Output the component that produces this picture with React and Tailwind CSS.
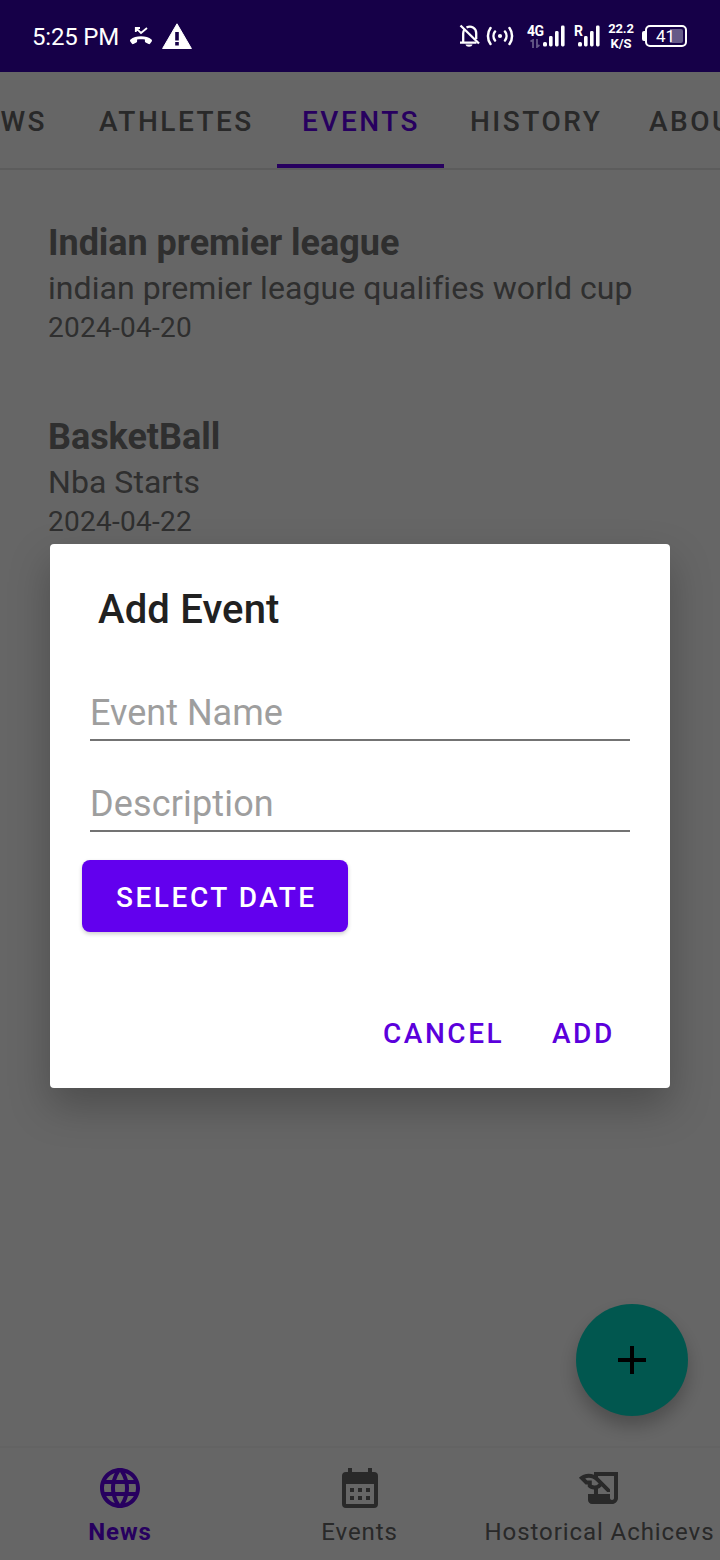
import React from "react";
import { MdLanguage, MdHistoryEdu } from "react-icons/md";

const TABS = [
  { label: "NEWS", box: "w-[75px] justify-end pr-[28px]" },
  { label: "ATHLETES", box: "w-[202px] pl-6" },
  { label: "EVENTS", box: "w-[167px] pl-[25px]", active: true },
  { label: "HISTORY", box: "w-[180px] pl-[26px]" },
  { label: "ABOUT", box: "w-[150px] pl-[25px]" },
];

const EVENTS = [
  { name: "Indian premier league", text: "indian premier league qualifies world cup", date: "2024-04-20" },
  { name: "BasketBall", text: "Nba Starts", date: "2024-04-22" },
];

function SignalBars({ className }) {
  return (
    <svg className={className} viewBox="0 0 22 22" fill="#fff">
      <rect x="0" y="17" width="4" height="4.5" rx="1.6" />
      <rect x="6" y="11" width="3.6" height="10.5" rx="1.4" />
      <rect x="12" y="6" width="3.6" height="15.5" rx="1.4" />
      <rect x="18" y="0.5" width="3.6" height="21" rx="1.4" />
    </svg>
  );
}

function StatusBar() {
  return (
    <header className="flex h-[72px] shrink-0 items-center bg-[#160048] pl-8 pr-[33px] text-white">
      <span className="mt-[1px] w-[97px] whitespace-nowrap text-[24px] leading-7 tracking-[-0.2px]">5:25 PM</span>
      <svg className="h-[20px] w-[24px]" viewBox="0 0 24 20">
        <path d="M6.8 6V2H11M7 2.200l5 4.800 6-5" fill="none" stroke="#fff" strokeWidth="1.8" />
        <path
          d="M12 10.200C7.800 10.200 4 11.300 1.500 13.400c-.6.5-.6 1.300-.2 2l1.500 2.200c.4.500 1 .7 1.600.4l3-1.400c.4-.2.7-.6.7-1v-2c2.500-.6 5.300-.6 7.800 0v2c0 .4.300.8.7 1l3 1.400c.6.3 1.200.1 1.600-.4l1.500-2.200c.4-.7.4-1.500-.2-2C20 11.300 16.200 10.200 12 10.200z"
          fill="#fff"
        />
      </svg>
      <svg className="ml-[9px] h-[26px] w-[30px]" viewBox="0 0 30 26">
        <path d="M15 .8 29.400 25.500H.6z" fill="#fff" stroke="#fff" strokeLinejoin="round" />
        <path d="M13.200 9h3.600v8.500h-3.600zM13.200 19h3.600v3.500h-3.600z" fill="#160048" />
      </svg>
      <div className="ml-auto flex items-center">
        <svg className="h-[24px] w-[22px]" viewBox="0 0 22 24" fill="none" stroke="#fff" strokeWidth="2.300">
          <path d="M4.200 18.500V9.500c0-1.800.5-3 1.300-4.100M7.500 3.600c4.500-2.600 9.700.5 9.700 5.400v6M1 18.600h16.500" />
          <path d="M1.500 1.500 20 19.500" strokeWidth="2.300" />
          <path d="M6.500 20.500h7c-.5 1.500-1.600 2.200-3.500 2.200s-3-.7-3.500-2.200z" fill="#fff" stroke="none" />
        </svg>
        <svg className="ml-[5px] h-[20px] w-[28px]" viewBox="0 0 28 20" fill="none" stroke="#fff" strokeWidth="2.500" strokeLinecap="round">
          <circle cx="14" cy="10" r="2.100" fill="#fff" stroke="none" />
          <path d="M9 5.500c-2 2.600-2 6.400 0 9M19 5.500c2 2.600 2 6.400 0 9M4.500 2c-3.400 4.600-3.400 11.400 0 16M23.500 2c3.400 4.600 3.400 11.400 0 16" />
        </svg>
        <div className="ml-[13px] flex h-[24px] w-[17px] flex-col">
          <span className="text-[14px] font-bold leading-[15px] tracking-[-0.6px]">4G</span>
          <svg className="ml-[3px] h-[9px] w-[10px]" viewBox="0 0 10 9" fill="none" stroke="#655a88" strokeWidth="1.800">
            <path d="M.5 2.500 3 1v8M7 0v8l2.500-2" />
          </svg>
        </div>
        <SignalBars className="-ml-[1px] h-[22px] w-[22px]" />
        <span className="mb-[9px] ml-[9px] w-[8px] text-[14px] font-bold leading-[15px]">R</span>
        <SignalBars className="-ml-[4px] h-[22px] w-[22px]" />
        <div className="ml-[8px] flex w-[26px] flex-col items-center text-[13px] font-bold leading-[15px]">
          <span className="tracking-[-0.1px]">22.2</span>
          <span>K/S</span>
        </div>
        <div className="ml-[8px] h-[10px] w-[3px] rounded-l-[2px] bg-white" />
        <div className="relative flex h-[22px] w-[42px] items-center justify-center rounded-[5px] border-2 border-white">
          <div className="absolute right-[2px] top-[2px] h-[14px] w-[13px] rounded-r-[2px] bg-[#655a88]" />
          <span className="relative pr-[1px] text-[17px] leading-[18px]">41</span>
        </div>
      </div>
    </header>
  );
}

function CalendarIcon() {
  return (
    <svg className="h-12 w-12" viewBox="0 0 48 48" fill="currentColor">
      <path
        fillRule="evenodd"
        d="M12 4h4v4h16V4h4v4h2a4 4 0 0 1 4 4v28a4 4 0 0 1-4 4H10a4 4 0 0 1-4-4V12a4 4 0 0 1 4-4h2zM10 20v20h28V20z"
      />
      <path d="M14 24h4v4h-4zM22 24h4v4h-4zM30 24h4v4h-4zM14 32h4v4h-4zM22 32h4v4h-4zM30 32h4v4h-4z" />
    </svg>
  );
}

export default function App() {
  return (
    <div className="flex h-[1560px] w-[720px] flex-col overflow-hidden font-['Roboto',sans-serif]">
      <StatusBar />
      <div className="relative flex flex-1 flex-col bg-white">
        <nav className="flex h-[98px] shrink-0 overflow-hidden border-b-2 border-black/10">
          {TABS.map((tab) => (
            <div
              key={tab.label}
              className={`flex h-[96px] shrink-0 items-center whitespace-nowrap border-b-4 pt-[8px] text-[28px] font-medium leading-8 tracking-[2.5px] ${tab.box} ${
                tab.active ? "border-[#6200ee] text-[#6200ee]" : "border-transparent text-[#666]"
              }`}
            >
              {tab.label}
            </div>
          ))}
        </nav>
        <main className="flex flex-1 flex-col gap-16 px-12 pt-[48px] text-[#757575]">
          {EVENTS.map((event) => (
            <article key={event.name}>
              <h2 className="mb-[1px] text-[36px] font-bold leading-[50px] tracking-[-0.04px]">{event.name}</h2>
              <p className="whitespace-nowrap text-[32px] leading-[39px] tracking-[0.05px]">{event.text}</p>
              <p className="text-[28px] leading-[40px] tracking-[0.25px]">{event.date}</p>
            </article>
          ))}
        </main>
        <button className="absolute bottom-[144px] right-8 flex h-28 w-28 items-center justify-center rounded-full bg-[#03dac5] shadow-[0_10px_18px_rgba(0,0,0,0.25)]">
          <svg className="h-7 w-7" viewBox="0 0 28 28">
            <path d="M12 0h4v12h12v4H16v12h-4V16H0v-4h12z" />
          </svg>
        </button>
        <footer className="flex h-[114px] shrink-0 border-t-2 border-black/[0.03] text-[24px] text-[#666]">
          <div className="flex w-60 flex-col items-center pt-4 text-[#6200ee]">
            <MdLanguage className="h-12 w-12" />
            <span className="mt-1 font-bold leading-8 tracking-[0.9px]">News</span>
          </div>
          <div className="flex w-60 flex-col items-center pt-4">
            <CalendarIcon />
            <span className="mt-1 pr-[1px] leading-8 tracking-[0.9px]">Events</span>
          </div>
          <div className="flex w-60 flex-col items-center pt-4">
            <MdHistoryEdu className="h-12 w-12" />
            <span className="mt-1 whitespace-nowrap pr-[1px] leading-8 tracking-[0.93px]">Hostorical Achicevs</span>
          </div>
        </footer>

        <div className="absolute inset-0 flex items-start justify-center bg-black/60 pt-[472px]">
          <section className="flex h-[544px] w-[620px] flex-col rounded-[4px] bg-white shadow-[0_18px_40px_rgba(0,0,0,0.25)]">
            <h1 className="ml-12 mt-[42px] text-[40px] font-medium leading-[48px] tracking-[0.15px] text-[#212121]">Add Event</h1>
            <div className="mx-10 mt-[55px] flex h-[52px] items-start border-b-2 border-[#737373] text-[36px] leading-[48px] text-[#9e9e9e]">
              Event Name
            </div>
            <div className="mx-10 mt-[39px] flex h-[52px] items-start border-b-2 border-[#737373] text-[36px] leading-[48px] tracking-[0.15px] text-[#9e9e9e]">
              Description
            </div>
            <button className="ml-8 mt-7 flex h-[72px] w-[266px] items-center rounded-lg bg-[#6200ee] pl-[34px] pt-[4px] text-[28px] font-medium tracking-[2.55px] text-white shadow-[0_2px_4px_rgba(0,0,0,0.2)]">
              SELECT DATE
            </button>
            <div className="mt-[86px] flex text-[28px] font-medium leading-8 tracking-[2.55px] text-[#5b00dc]">
              <button className="ml-[333px] w-[169px] text-left">CANCEL</button>
              <button>ADD</button>
            </div>
          </section>
        </div>
      </div>
    </div>
  );
}
